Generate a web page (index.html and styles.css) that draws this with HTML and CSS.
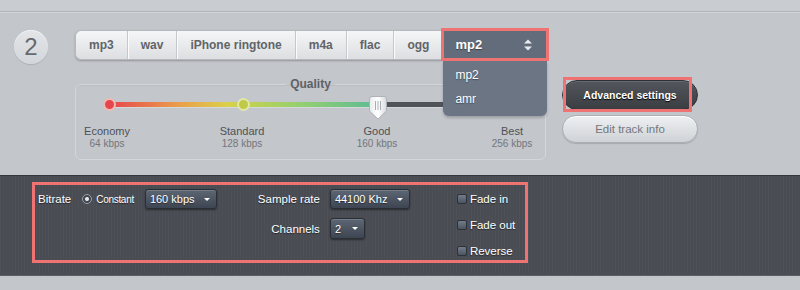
FILE: index.html
```html
<!doctype html>
<html>
<head>
  <meta charset="UTF-8">
  <title>Audio converter</title>
  <link rel="stylesheet" href="styles.css">
</head>
<body>
  <div class="topbar"></div>

  <div class="step">
    <div class="step-num">2</div>

    <div class="step-body">
      <div class="formats">
        <ul class="tabs">
          <li>mp3</li>
          <li>wav</li>
          <li>iPhone ringtone</li>
          <li>m4a</li>
          <li>flac</li>
          <li>ogg</li>
        </ul>
        <div class="format-select">
          <div class="current">
            <span>mp2</span>
            <svg width="10" height="14" viewBox="0 0 10 14"><path d="M1 5.5 L5 1.5 L9 5.5Z M1 8.5 L5 12.5 L9 8.5Z" fill="#e9ecf0"/></svg>
          </div>
          <ul class="options">
            <li>mp2</li>
            <li>amr</li>
          </ul>
        </div>
      </div>

      <fieldset class="quality">
        <legend>Quality</legend>
        <div class="slider">
          <div class="track"><div class="fill"></div></div>
          <span class="dot dot-red"></span>
          <span class="dot dot-lime"></span>
          <svg class="thumb" width="18" height="24" viewBox="0 0 18 24">
            <defs>
              <linearGradient id="tg" x1="0" y1="0" x2="1" y2="0">
                <stop offset="0" stop-color="#e9ebee"/>
                <stop offset="0.5" stop-color="#ffffff"/>
                <stop offset="1" stop-color="#d7dade"/>
              </linearGradient>
            </defs>
            <path d="M3 0.5 H15 Q17.5 0.5 17.5 3 V15 L9 23 L0.5 15 V3 Q0.5 0.5 3 0.5Z" fill="url(#tg)" stroke="#aeb2b7"/>
            <path d="M6.5 5 V14 M9 5 V14 M11.5 5 V14" stroke="#a9adb3" stroke-width="1"/>
          </svg>
        </div>
        <div class="levels">
          <div class="level"><b>Economy</b><span>64 kbps</span></div>
          <div class="level"><b>Standard</b><span>128 kbps</span></div>
          <div class="level"><b>Good</b><span>160 kbps</span></div>
          <div class="level"><b>Best</b><span>256 kbps</span></div>
        </div>
      </fieldset>
    </div>

    <div class="actions">
      <button class="btn btn-dark">Advanced settings</button>
      <button class="btn btn-light">Edit track info</button>
    </div>
  </div>

  <div class="advanced">
    <div class="settings">
      <div class="bitrate">
        <span class="label">Bitrate</span>
        <span class="radio"></span>
        <span class="radio-text">Constant</span>
        <div class="select sel-bitrate"><span>160 kbps</span><i class="caret"></i></div>
      </div>

      <div class="audio-grid">
        <span class="label">Sample rate</span>
        <div class="select sel-rate"><span>44100 Khz</span><i class="caret"></i></div>
        <span class="label">Channels</span>
        <div class="select sel-channels"><span>2</span><i class="caret"></i></div>
      </div>

      <div class="effects">
        <label class="effect"><span class="check"></span>Fade in</label>
        <label class="effect"><span class="check"></span>Fade out</label>
        <label class="effect"><span class="check"></span>Reverse</label>
      </div>
    </div>
  </div>
</body>
</html>
```

FILE: styles.css
```css
*{margin:0;
  padding:0;
  box-sizing:border-box;}
body{background:#c3c6cb;
     font-family:"Liberation Sans", Arial, sans-serif;
     height:290px;
     overflow:hidden;}
ul{list-style:none;}

.topbar{height:12px;
        background:#c9ccd0;
        border-bottom:1px solid #b2b5ba;
        box-shadow:0 1px 0 #d3d6d9;}

/* step row */
.step{display:flex;
      align-items:flex-start;
      padding:18px 0 15px 14px;}
.step-num{width:34px; height:34px;
          border-radius:50%;
          background:linear-gradient(#e3e5e8,#d3d6da);
          box-shadow:0 1px 1px rgba(0,0,0,.12), inset 0 1px 0 #eef0f2;
          color:#66696e;
          font-size:24px;
          line-height:34px;
          text-align:center;}
.step-body{margin-left:27px; width:473px;}

/* format tabs */
.formats{display:flex; align-items:flex-start;}
.tabs{display:flex;
      height:30px;
      border:1px solid #b6b9be;
      border-right:0;
      border-radius:6px 0 0 6px;
      background:linear-gradient(#f5f6f7,#dcdee1);
      box-shadow:0 1px 2px rgba(0,0,0,.25);
      overflow:hidden;}
.tabs li{padding:0 13px;
         line-height:28px;
         font-size:12px;
         font-weight:bold;
         color:#616469;
         border-left:1px solid #c4c7cb;
         box-shadow:inset 1px 0 0 #fbfbfc;}
.tabs li:first-child{border-left:0; box-shadow:none;}

.format-select{position:relative; z-index:2; margin:1px 0 0 2px; width:102px;}
.format-select .current{display:flex;
         align-items:center;
         justify-content:space-between;
         height:27px;
         padding:0 13px 0 11px;
         background:#636c7a;
         outline:3px solid #f07373;
         color:#fff;
         font-size:13px;
         font-weight:bold;
         text-shadow:0 1px 1px rgba(0,0,0,.4);}
.format-select .options{position:absolute;
         top:30px; left:-1px;
         width:104px;
         padding:2px 0 5px;
         background:#6c7584;
         border-radius:0 0 6px 6px;
         box-shadow:0 2px 3px rgba(0,0,0,.2);}
.options li{padding-left:12px;
            line-height:24px;
            font-size:12px;
            color:#fff;
            text-shadow:0 1px 1px rgba(0,0,0,.35);}

/* quality */
.quality{margin-top:17px;
         width:471px;
         border:1px solid #d4d7da;
         border-radius:6px;
         padding:0 0 9px;
         box-shadow:inset 0 1px 0 #babdc2;}
.quality legend{margin:0 auto;
                padding:0 4px;
                font-size:12px;
                font-weight:bold;
                line-height:14px;
                color:#5e6166;}
.slider{position:relative; height:26px; margin:0 33px;}
.slider .track{position:absolute;
               left:0; right:0; top:11px;
               height:5px;
               border-radius:3px;
               background:#505358;
               box-shadow:0 1px 0 #d5d8db;}
.slider .fill{width:66.7%;
              height:100%;
              border-radius:3px 0 0 3px;
              background:linear-gradient(to right,#e6464c 0%,#eb9e4b 26%,#d9d04b 44%,#c3d24f 51%,#93cf72 72%,#5cbb94 100%);}
.slider .dot{position:absolute;
             top:7px;
             width:13px; height:13px;
             margin-left:-6px;
             border-radius:50%;
             border:2px solid #e9e2dc;}
.slider .dot-red{left:0; background:#e4464b; border-color:#f1b9b5;}
.slider .dot-lime{left:33.3%; background:#bfca48; border-color:#e2e6a6;}
.slider .thumb{position:absolute; top:5px; left:calc(66.7% - 9px);}

.levels{display:flex;
        justify-content:space-between;
        padding:0 8px 0 6px;
        margin-top:7px;}
.level{width:50px;
       display:flex;
       flex-direction:column;
       align-items:center;
       white-space:nowrap;}
.level b{font-weight:normal; font-size:11px; line-height:14px; color:#4e5156;}
.level span{font-size:10px; line-height:12px; color:#73767b;}

/* buttons */
.actions{margin:50px 0 0 14px;}
.btn{display:block;
     width:136px;
     border-radius:15px;
     font-family:"Liberation Sans", Arial, sans-serif;
     cursor:pointer;}
.btn-dark{position:relative;
          height:30px;
          border:1px solid #2e3135;
          background:linear-gradient(#53565c,#3a3d42);
          box-shadow:inset 0 1px 0 rgba(255,255,255,.12);
          color:#fff;
          font-size:10.5px;
          font-weight:bold;
          text-shadow:0 1px 1px #000;}
.btn-dark::after{content:"";
                 position:absolute;
                 left:0; right:5px; top:-4px; bottom:-3px;
                 border:3px solid #f07373;}
.btn-light{height:28px;
           margin-top:5px;
           border:1px solid #acafb4;
           background:linear-gradient(#eef0f2,#cfd2d6);
           box-shadow:0 1px 1px rgba(0,0,0,.15), inset 0 1px 0 #fff;
           color:#74777c;
           font-size:11.5px;}

/* advanced settings panel */
.advanced{height:101px;
          padding:6px 0 0 32px;
          background:#494c52 repeating-linear-gradient(90deg,rgba(255,255,255,.025) 0 1px,transparent 1px 3px);
          border-top:1px solid #33363a;
          border-bottom:1px solid #5b5e63;}
.settings{display:flex;
          align-items:flex-start;
          width:496px; height:81px;
          padding:4px 0 0 3px;
          border:3px solid #f07373;
          color:#fff;
          font-size:11.5px;}
.settings .label{text-shadow:0 1px 1px rgba(0,0,0,.5);}

.bitrate{display:flex; align-items:center; height:20px;}
.radio{width:10px; height:10px;
       margin-left:11px;
       border-radius:50%;
       border:1px solid #9aa0a8;
       background:radial-gradient(circle,#e4e8ec 0 1.5px,#3f4652 2.5px);}
.radio-text{margin-left:4px;
            font-size:10px;
            letter-spacing:-.3px;
            text-shadow:0 1px 1px rgba(0,0,0,.5);}

.select{display:flex;
        align-items:center;
        justify-content:space-between;
        height:20px;
        padding:0 6px 0 4px;
        border:1px solid #2a2e35;
        border-radius:3px;
        background:linear-gradient(#5d6674,#3e4552);
        box-shadow:inset 0 1px 0 rgba(255,255,255,.15), 0 1px 2px rgba(0,0,0,.45);
        font-size:11px;
        text-shadow:0 1px 1px rgba(0,0,0,.5);}
.select .caret{width:0; height:0;
               border-left:3px solid transparent;
               border-right:3px solid transparent;
               border-top:3px solid #fff;}
.sel-bitrate{margin-left:11px; width:72px;}
.sel-rate{width:80px;}
.sel-channels{width:35px; height:21px;}

.audio-grid{display:grid;
            grid-template-columns:60px auto;
            column-gap:10px;
            row-gap:9px;
            align-items:center;
            justify-items:start;
            margin-left:43px;}
.audio-grid .label{justify-self:end; white-space:nowrap;}

.effects{margin:-3px 0 0 47px;}
.effect{display:flex;
        align-items:center;
        height:26px;
        text-shadow:0 1px 1px rgba(0,0,0,.5);}
.check{width:10px; height:10px;
       margin-right:3px;
       border-radius:2px;
       border:1px solid #2c3037;
       background:linear-gradient(#737c8a,#4b5461);}
```
